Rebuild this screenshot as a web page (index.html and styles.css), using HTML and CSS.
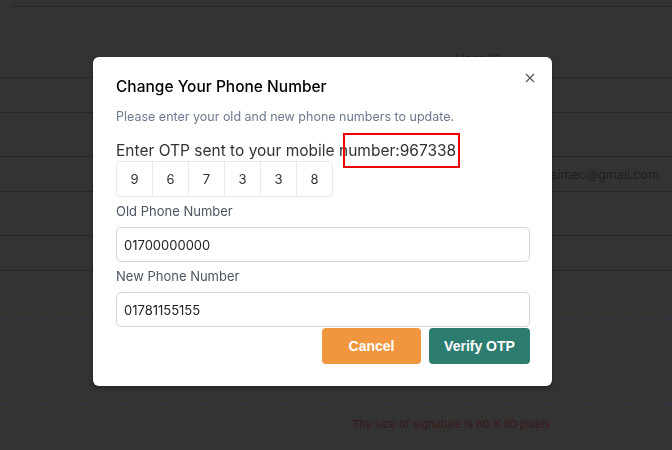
FILE: index.html
```html
<!DOCTYPE html>
<html lang="en">
<head>
    <title>Change Phone Number</title>
    <link rel="stylesheet" href="styles.css">
</head>
<body>
    <div class="page">
        <div class="row top-rule"></div>
        <div class="row head-row"><span class="head-cell">User ID</span></div>
        <div class="row short"></div>
        <div class="row tall"></div>
        <div class="row short"><span class="email">simec@gmail.com</span></div>
        <div class="row tall"></div>
        <div class="row short"></div>
        <div class="dashed first"></div>
        <div class="dashed second"></div>
        <p class="sign-note">The size of signature is 80 X 80 pixels</p>
    </div>

    <div class="overlay">
        <div class="modal">
            <button class="close-btn" aria-label="Close">
                <svg width="10" height="10" viewBox="0 0 10 10">
                    <path d="M1 1 L9 9 M9 1 L1 9" stroke="#555" stroke-width="1.2" fill="none"/>
                </svg>
            </button>
            <h2 class="modal-title">Change Your Phone Number</h2>
            <p class="modal-sub">Please enter your old and new phone numbers to update.</p>
            <p class="otp-label">Enter OTP sent to your mobile number:967338</p>
            <div class="otp-mark"></div>
            <div class="otp-boxes">
                <input class="otp-box" type="text" value="9">
                <input class="otp-box" type="text" value="6">
                <input class="otp-box" type="text" value="7">
                <input class="otp-box" type="text" value="3">
                <input class="otp-box" type="text" value="3">
                <input class="otp-box" type="text" value="8">
            </div>
            <label class="field-label">Old Phone Number</label>
            <input class="field-input" type="text" value="01700000000">
            <label class="field-label">New Phone Number</label>
            <input class="field-input" type="text" value="01781155155">
            <div class="actions">
                <button class="btn btn-cancel">Cancel</button>
                <button class="btn btn-verify">Verify OTP</button>
            </div>
        </div>
    </div>
</body>
</html>
```

FILE: styles.css
```css
body {
    margin: 0;
    background-color: #333333;
    font-family: Inter, "Noto Sans", sans-serif;
    overflow: hidden;
}

/* faded page behind the dialog */
.page {
    height: 450px;
}

.row {
    border-bottom: 1px solid #272727;
    box-sizing: border-box;
    display: flex;
    align-items: center;
}

.top-rule {
    height: 7px;
    margin-left: 11px;
}

.head-row {
    height: 71px;
    align-items: flex-end;
}

.head-cell {
    margin-left: 455px;
    margin-bottom: 10px;
    font-size: 13px;
    color: #222222;
}

.short {
    height: 35px;
}

.tall {
    height: 44px;
}

.email {
    margin-left: 551px;
    font-size: 12.5px;
    color: #1f1f1f;
}

.dashed {
    border-top: 1px dashed #2c2c48;
}

.dashed.first {
    margin-top: 47px;
}

.dashed.second {
    margin-top: 85px;
}

.sign-note {
    margin: 12px 0 0 352px;
    font-size: 11px;
    color: #3a1818;
}

/* dialog */
.overlay {
    position: fixed;
    inset: 0;
    display: flex;
    align-items: flex-start;
    padding: 57px 0 0 93px;
}

.modal {
    position: relative;
    width: 459px;
    box-sizing: border-box;
    background-color: #ffffff;
    border-radius: 6px;
    padding: 18px 22px 22px 23px;
    box-shadow: 0 2px 4px rgba(0, 0, 0, 0.3);
}

.close-btn {
    position: absolute;
    top: 16px;
    right: 17px;
    border: none;
    background: none;
    padding: 0;
    line-height: 0;
    cursor: pointer;
}

.modal-title {
    margin: 0;
    font-size: 15.5px;
    font-weight: 500;
    color: #000000;
    line-height: 24px;
}

.modal-sub {
    margin: 9px 0 0;
    font-size: 12.5px;
    color: #6b7a90;
    line-height: 18px;
}

.otp-label {
    margin: 15px 0 0;
    font-size: 15.5px;
    color: #333333;
    line-height: 20px;
}

.otp-mark {
    position: absolute;
    left: 250px;
    top: 76px;
    width: 117px;
    height: 35px;
    border: 2px solid #f00000;
    box-sizing: border-box;
}

.otp-boxes {
    display: flex;
}

.otp-box {
    width: 37px;
    height: 36px;
    box-sizing: border-box;
    border: 1px solid #e6e9ef;
    margin-left: -1px;
    text-align: center;
    font-family: Inter, sans-serif;
    font-size: 13px;
    color: #333333;
    padding: 0;
}

.otp-box:first-child {
    margin-left: 0;
    border-radius: 4px 0 0 4px;
}

.otp-box:last-child {
    border-radius: 0 4px 4px 0;
}

.field-label {
    display: block;
    margin-top: 5px;
    font-size: 13px;
    color: #4b5563;
    line-height: 18px;
}

.field-input {
    display: block;
    width: 100%;
    height: 35px;
    box-sizing: border-box;
    margin-top: 6px;
    border: 1px solid #d4d4d8;
    border-radius: 5px;
    padding: 0 7px;
    font-family: Inter, sans-serif;
    font-size: 13px;
    color: #222222;
}

.field-label + .field-input {
    margin-top: 7px;
}

.actions {
    display: flex;
    justify-content: flex-end;
    gap: 8px;
    margin-top: 1px;
}

.btn {
    height: 36px;
    border: none;
    border-radius: 4px;
    color: #ffffff;
    font-family: "Liberation Sans", Arial, sans-serif;
    font-size: 14px;
    font-weight: bold;
    cursor: pointer;
}

.btn-cancel {
    width: 99px;
    background-color: #f0963f;
}

.btn-verify {
    width: 101px;
    background-color: #2c7c70;
}
```
